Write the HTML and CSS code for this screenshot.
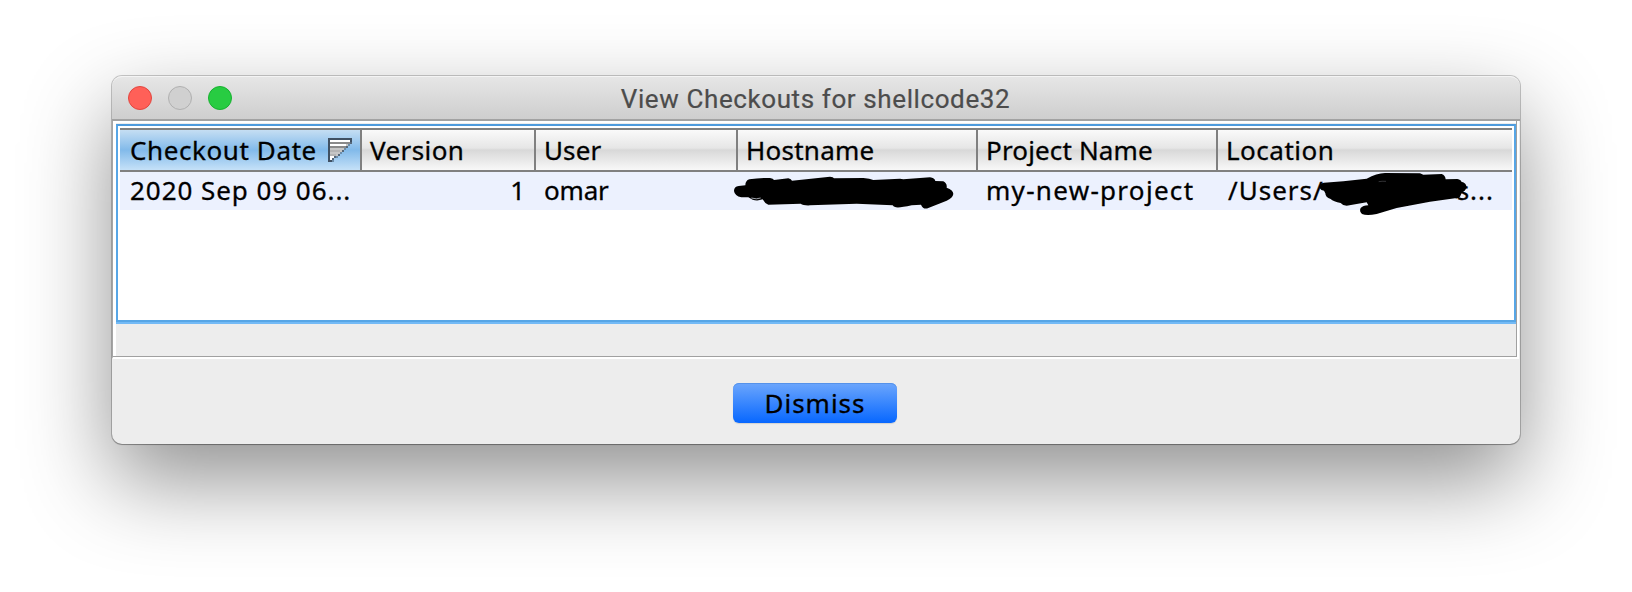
FILE: index.html
```html
<!DOCTYPE html>
<html lang="en">
<head>
    <meta charset="UTF-8">
    <title>View Checkouts for shellcode32</title>
    <link rel="stylesheet" href="styles.css">
</head>
<body>
    <div class="window">
        <div class="titlebar">
            <div class="lights">
                <span class="light close"></span>
                <span class="light minimize"></span>
                <span class="light zoom"></span>
            </div>
            <div class="title">View Checkouts for shellcode32</div>
        </div>

        <div class="content">
            <div class="scrollpane">
                <div class="table">
                    <div class="row header">
                        <div class="cell sorted"><span class="t-date">Checkout Date</span>
                            <svg class="sort-icon" width="24" height="24" viewBox="0 0 24 24" shape-rendering="crispEdges">
                                <path d="M0 0H24V4H22V6H20V8H18V10H16V12H14V14H12V16H10V18H8V20H6V24H0Z" fill="#c6c6c6"/>
                                <path d="M2 4H22V6H2ZM2 8H18V10H2Z" fill="#8a8a8a"/>
                                <path d="M2 2H22V4H2ZM2 6H18V8H2ZM2 18H6V20H2ZM2 20H4V22H2Z" fill="#fff"/>
                                <path d="M2 12H12V14H2ZM2 16H8V18H2Z" fill="#b4b4b4"/>
                                <path d="M0 0H24V2H0ZM0 0H2V24H0ZM2 22H4V24H2ZM22 2H24V4H22Z" fill="#405062"/>
                                <path d="M22 4H24V6H22ZM18 8H20V10H18ZM14 12H16V14H14ZM10 16H12V18H10ZM6 18H8V20H6ZM4 20H6V22H4Z" fill="#56687a"/>
                                <path d="M20 6H22V8H20ZM16 10H18V12H16ZM12 14H14V16H12ZM8 18H10V20H8ZM4 22H6V24H4Z" fill="#6c8daa"/>
                            </svg>
                        </div>
                        <div class="cell"><span class="t-version">Version</span></div>
                        <div class="cell"><span class="t-user">User</span></div>
                        <div class="cell"><span class="t-host">Hostname</span></div>
                        <div class="cell"><span class="t-project">Project Name</span></div>
                        <div class="cell"><span class="t-location">Location</span></div>
                    </div>
                    <div class="row data">
                        <div class="cell"><span class="d-date">2020 Sep 09 06...</span></div>
                        <div class="cell number">1</div>
                        <div class="cell"><span class="d-user">omar</span></div>
                        <div class="cell">
                            <svg class="scribble host" width="224" height="36" viewBox="36 192 672 108">
                                <path d="M42 243Q42 230 56 228L76 226Q76 212 88 208Q120 203 150 204Q160 206 162 210L205 205Q214 207 216 212L330 200Q340 201 342 205L430 204Q450 206 460 210L540 206L550 208L630 202Q644 204 646 213L670 214Q682 220 680 233Q700 240 700 252Q698 264 680 272L625 294Q610 300 603 284L575 286Q540 294 528 292Q520 291 518 286L410 281L270 286Q250 287 242 281L145 284Q134 280 128 268Q112 274 98 269L85 262H64Q44 258 42 243Z"/>
                                <path d="M94 264Q110 269 122 264" fill="none" stroke="#ecf1fe" stroke-width="2"/>
                            </svg>
                        </div>
                        <div class="cell"><span class="d-project">my-new-project</span></div>
                        <div class="cell path">
                            <span class="d-path">/Users/</span><span class="d-end">s...</span>
                            <svg class="scribble location" width="152" height="44" viewBox="324 324 456 132">
                                <path d="M329 372Q328 358 342 356L400 352L470 344Q500 328 525 327L630 328L640 332L695 330Q706 334 707 346L742 345Q754 348 754 353Q770 356 769 370Q767 382 756 385L750 398Q746 405 735 403L660 413L560 432L500 450Q470 456 456 450Q447 442 452 432Q458 425 475 424L470 415L410 425Q398 425 392 417Q370 413 362 405Q346 400 346 388L342 380Q333 380 329 372Z"/>
                                <path d="M506 353Q516 351 528 352" fill="none" stroke="#9a9ca4" stroke-width="1"/>
                            </svg>
                        </div>
                    </div>
                </div>
            </div>
        </div>

        <div class="buttons">
            <button class="dismiss"><span>Dismiss</span></button>
        </div>
    </div>
</body>
</html>
```
FILE: styles.css
```css
body {
    margin: 0;
    height: 592px;
    overflow: hidden;
    background: white;
    font-family: "Noto Sans", sans-serif;
    font-size: 26px;
    color: black;
}
.window {
    width: 1408px;
    height: 368px;
    margin: 76px 0 0 112px;
    border-radius: 10px;
    background: #ededed;
    display: flex;
    flex-direction: column;
    box-shadow: 0 0 0 1px rgba(0, 0, 0, 0.2), 0 1px 1px rgba(0, 0, 0, 0.2), 0 36px 88px rgba(0, 0, 0, 0.44);
}
.titlebar {
    box-sizing: border-box;
    height: 45px;
    display: grid;
    grid-template-columns: 120px 1fr 120px;
    align-items: center;
    border-radius: 10px 10px 0 0;
    border-top: 1px solid #f4f4f4;
    border-bottom: 2px solid #a2a2a2;
    background: linear-gradient(#e6e6e6, #cecece);
}
.lights {
    display: flex;
    gap: 16px;
    padding: 0 0 1px 16px;
}
.light {
    box-sizing: border-box;
    width: 24px;
    height: 24px;
    border-radius: 50%;
    border: 1px solid;
}
.close {
    background: #ff6058;
    border-color: #e2463f;
}
.minimize {
    background: #d0d0d0;
    border-color: #b0b0b0;
}
.zoom {
    background: #28cc42;
    border-color: #17b230;
}
.title {
    font-family: Roboto, sans-serif;
    color: #4c4c4c;
    text-align: center;
    letter-spacing: 0.6px;
    line-height: 40px;
    padding-top: 2px;
    margin-left: -1px;
    -webkit-text-stroke: 0.2px;
}
.content {
    box-sizing: border-box;
    height: 238px;
    padding: 3px 1px 32px 3px;
    margin-right: 1px;
    border-left: 1px solid #a5a5a5;
    border-right: 2px solid white;
    border-bottom: 2px solid white;
    background: linear-gradient(90deg, white 3px, #ededed 3px);
    box-shadow: inset -1px -1px #a0a0a0, inset 0 2px white;
}
.scrollpane {
    box-sizing: border-box;
    height: 198px;
    padding: 2px;
    background: white;
    border: 2px solid #57a6e6;
    border-top-color: #4e9bdd;
    box-shadow: 0 2px #73baf6;
}
.table, .dismiss {
    -webkit-text-stroke: 0.3px;
}
.row {
    display: grid;
    grid-template-columns: 242px 174px 202px 240px 240px 294px;
}
.header {
    height: 40px;
    border-top: 2px solid #808080;
    border-bottom: 2px solid #808080;
}
.header .cell {
    background: linear-gradient(#fafafa, #e6e6e6 45%, #d8d8d8 50%, #f8f8f8);
    border-right: 2px solid #808080;
    padding-left: 8px;
}
.header .cell:last-child {
    border-right: none;
}
.header .sorted {
    background: linear-gradient(#c5def3, #82baea 50%, #c5e1f8);
    justify-content: space-between;
    padding-left: 10px;
    padding-right: 8px;
}
.sort-icon {
    margin-bottom: 1px;
}
.cell {
    position: relative;
    display: flex;
    align-items: center;
    line-height: 38px;
    padding-left: 8px;
    white-space: nowrap;
}
.data {
    height: 38px;
    background: #ecf1fe;
}
.data .cell {
    line-height: 36px;
    align-items: flex-start;
}
.data .cell:first-child, .data .path {
    padding-left: 10px;
}
.data .number {
    justify-content: flex-end;
    padding-right: 11px;
}
.data .path {
    justify-content: space-between;
    padding-right: 18px;
}
.t-date { letter-spacing: 0.6px; }
.t-version { letter-spacing: 0.4px; }
.t-user { letter-spacing: 0.1px; }
.t-host { letter-spacing: 0.25px; }
.t-project { letter-spacing: 0.15px; }
.t-location { letter-spacing: 0.5px; }
.d-date { letter-spacing: 0.95px; }
.d-user { letter-spacing: -0.2px; }
.d-project { letter-spacing: 1.3px; }
.d-path { letter-spacing: 1px; }
.d-end { letter-spacing: 1px; }
.scribble {
    position: absolute;
}
.host {
    left: -6px;
    top: 2px;
}
.location {
    left: 100px;
    top: 0;
}
.buttons {
    display: flex;
    justify-content: center;
    padding-top: 24px;
}
.dismiss {
    width: 164px;
    height: 40px;
    margin-right: 2px;
    padding: 0;
    border: none;
    border-radius: 6px;
    font: inherit;
    color: black;
    line-height: 38px;
    letter-spacing: 1px;
    background: linear-gradient(#6ca6fc, #0767ff);
    box-shadow: inset 0 1px #5592ea, 0 1px 1px rgba(0, 0, 0, 0.12);
}
```
